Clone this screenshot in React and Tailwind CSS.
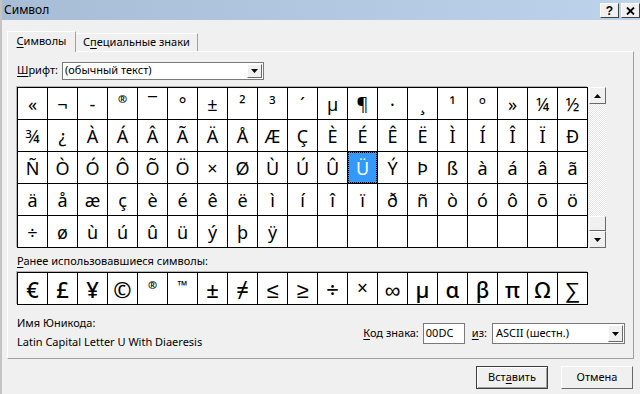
import React from 'react'

const range = (a, b) => {
  const out = []
  for (let c = a; c <= b; c++) out.push(c)
  return out
}

// soft hyphen (0xAD) shows as a plain dash in the grid
const glyph = (code) => (code === 0xad ? '-' : String.fromCharCode(code))

const rows = [
  range(0xab, 0xbd),
  range(0xbe, 0xd0),
  range(0xd1, 0xe3),
  range(0xe4, 0xf6),
  range(0xf7, 0xff),
]

const recent = ['€', '£', '¥', '©', '®', '™', '±', '≠', '≤', '≥', '÷', '×', '∞', 'µ', 'α', 'β', 'π', 'Ω', '∑']

const SELECTED = 0xdc

function U({ children }) {
  return <span className="underline underline-offset-2">{children}</span>
}

function Triangle({ up }) {
  return (
    <svg width="7" height="4" viewBox="0 0 7 4">
      {up ? <path d="M3.5 0L7 4H0z" fill="black" /> : <path d="M0 0h7L3.5 4z" fill="black" />}
    </svg>
  )
}

function ComboButton() {
  return (
    <div className="w-[15px] h-full flex items-center justify-center bg-[#f0f0f0] border border-t-white border-l-white border-r-[#696969] border-b-[#696969]">
      <Triangle />
    </div>
  )
}

function Cell({ code }) {
  const selected = code === SELECTED
  const tiny = code === 0xae
  return (
    <div className="h-[32px] border-r border-b border-black">
      {code !== undefined && (
        <div
          className={
            'h-full flex justify-center leading-none ' +
            (tiny ? 'pt-[5px] text-[11px] font-bold ' : 'items-center text-[18px] ') +
            (selected ? 'bg-[#3399ff] text-white border border-dotted border-black' : '')
          }
        >
          {glyph(code)}
        </div>
      )}
    </div>
  )
}

function RecentCell({ ch }) {
  const small = ch === '®' || ch === '™'
  const light = ch === '×'
  return (
    <div className="h-[32px] border-r border-b border-black flex justify-center">
      {small ? (
        <span className={'pt-[6px] leading-none font-bold ' + (ch === '™' ? 'text-[13px]' : 'text-[11px]')}>{ch}</span>
      ) : (
        <span className={'self-center leading-none ' + (light ? 'text-[19px]' : 'text-[22px] font-medium')}>{ch}</span>
      )}
    </div>
  )
}

export default function App() {
  const cells = rows.flatMap((r) => [...r, ...Array(19 - r.length).fill(undefined)])

  return (
    <div className="w-[640px] h-[394px] overflow-hidden bg-[#f0f0f0] border-l-2 border-[#c4c4c4] flex flex-col font-['Noto_Sans',sans-serif] text-[11px] text-black">
      {/* Title bar */}
      <div className="h-[20px] shrink-0 flex items-center pl-[2px] bg-gradient-to-r from-[#a7bdd6] to-[#bcd3eb]">
        <span className="text-[12px]">Символ</span>
        <div className="ml-auto flex gap-[2px] self-start mt-[3px]">
          <div className="w-[19px] h-[15px] flex items-center justify-center bg-[#f0f0f0] border border-t-white border-l-white border-r-[#404040] border-b-[#404040] font-bold text-[12px] leading-none font-['Liberation_Sans',sans-serif]">
            ?
          </div>
          <div className="w-[19px] h-[15px] flex items-center justify-center bg-[#f0f0f0] border border-t-white border-l-white border-r-[#404040] border-b-[#404040]">
            <svg width="9" height="8" viewBox="0 0 9 8">
              <path d="M1 0.5L8 7.5M8 0.5L1 7.5" stroke="black" strokeWidth="1.8" />
            </svg>
          </div>
        </div>
      </div>

      {/* Tabs */}
      <div className="ml-[5px] mt-[10px] flex items-end h-[21px]">
        <div className="h-[21px] w-[69px] -mb-px z-10 bg-[#f0f0f0] border border-b-0 border-t-white border-l-white border-r-[#a0a0a0] flex items-center justify-center pb-[2px]">
          <span>
            <U>С</U>имволы
          </span>
        </div>
        <div className="h-[18px] w-[122px] border border-b-0 border-t-white border-l-0 border-r-[#a0a0a0] flex items-center justify-center">
          <span>
            С<U>п</U>ециальные знаки
          </span>
        </div>
      </div>

      {/* Tab panel */}
      <div className="ml-[5px] w-[627px] h-[308px] border border-t-white border-l-white border-r-[#a0a0a0] border-b-[#a0a0a0] pl-[9px] pt-[10px] flex flex-col">
        <div className="flex items-center h-[17px]">
          <span className="w-[45px]">
            <U>Ш</U>рифт:
          </span>
          <div className="w-[202px] h-[18px] bg-white border border-[#7a7a7a] flex items-center pl-[2px] pr-px py-px">
            <span className="flex-1">(обычный текст)</span>
            <ComboButton />
          </div>
        </div>

        <div className="mt-[8px] flex">
          <div className="grid grid-cols-[repeat(19,30px)] border-l border-t border-black bg-white shadow-[-1px_-1px_0_#b4b4b4]">
            {cells.map((c, i) => (
              <Cell key={i} code={c} />
            ))}
          </div>
          <div className="ml-px w-[17px] flex flex-col">
            <div className="h-[17px] flex items-center justify-center bg-[#f0f0f0] border border-t-white border-l-white border-r-[#696969] border-b-[#696969]">
              <Triangle up />
            </div>
            <div className="flex-1 bg-[repeating-conic-gradient(#ffffff_0_25%,#e4e4e4_0_50%)] bg-[length:2px_2px] flex flex-col justify-end">
              <div className="h-[15px] bg-[#f0f0f0] border border-t-white border-l-white border-r-[#696969] border-b-[#696969]" />
            </div>
            <div className="h-[17px] flex items-center justify-center bg-[#f0f0f0] border border-t-white border-l-white border-r-[#696969] border-b-[#696969]">
              <Triangle />
            </div>
          </div>
        </div>

        <div className="mt-[5px] h-[16px] flex items-center">
          <span>
            <U>Р</U>анее использовавшиеся символы:
          </span>
        </div>
        <div className="mt-[3px] w-[571px] grid grid-cols-[repeat(19,30px)] border-l border-t border-black bg-white shadow-[-1px_-1px_0_#b4b4b4]">
          {recent.map((ch, i) => (
            <RecentCell key={i} ch={ch} />
          ))}
        </div>

        <div className="flex mt-[10px]">
          <div className="flex flex-col gap-[3px]">
            <span className="h-[16px] leading-[16px]">Имя Юникода:</span>
            <span className="h-[16px] leading-[16px]">Latin Capital Letter U With Diaeresis</span>
          </div>
          <div className="ml-auto mr-[8px] mt-[8px] flex items-center h-[21px]">
            <span className="mr-[4px]">
              <U>К</U>од знака:
            </span>
            <div className="w-[42px] h-[21px] bg-white border border-[#7a7a7a] flex items-center pl-[2px]">00DC</div>
            <span className="ml-[7px] mr-[5px]">
              <U>и</U>з:
            </span>
            <div className="w-[133px] h-[21px] bg-white border border-[#7a7a7a] flex items-center pl-[3px] pr-px py-px">
              <span className="flex-1">ASCII (шестн.)</span>
              <ComboButton />
            </div>
          </div>
        </div>
      </div>

      {/* Buttons */}
      <div className="mt-[7px] mr-[7px] flex justify-end gap-[13px]">
        <div className="w-[72px] h-[23px] flex items-center justify-center bg-[#f0f0f0] border border-[#3c3c3c] shadow-[inset_1px_1px_0_#ffffff,inset_-1px_-1px_0_#a0a0a0]">
          <span>
            Вст<U>а</U>вить
          </span>
        </div>
        <div className="w-[72px] h-[23px] flex items-center justify-center bg-[#f0f0f0] border border-t-white border-l-white border-r-[#696969] border-b-[#696969]">
          Отмена
        </div>
      </div>
    </div>
  )
}
